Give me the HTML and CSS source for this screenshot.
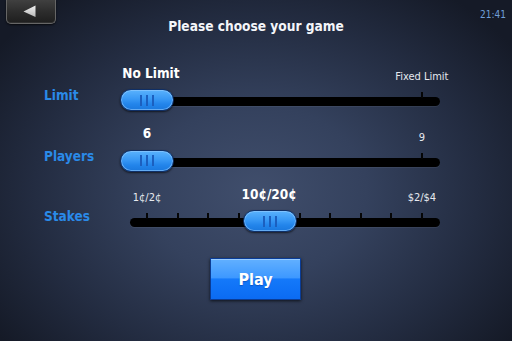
FILE: index.html
```html
<!DOCTYPE html>
<html lang="en">
<head>
<meta charset="utf-8">
<title>Choose your game</title>
<link rel="stylesheet" href="styles.css">
</head>
<body>
<div class="screen">
  <header class="top">
    <button class="back" aria-label="Back">
      <svg width="14" height="13" viewBox="0 0 14 13"><defs><linearGradient id="tri" x1="0" y1="0" x2="0" y2="1"><stop offset="0" stop-color="#f2f2f2"/><stop offset="1" stop-color="#b8b8b8"/></linearGradient></defs><polygon points="0.5,6.5 12.5,0.5 12.5,12" fill="url(#tri)"/></svg>
    </button>
    <h1 class="title">Please choose your game</h1>
    <span class="clock">21:41</span>
  </header>

  <main class="options">
    <section class="row">
      <div class="label">Limit</div>
      <div class="values">
        <span class="val current at-0 nudge"><span>No Limit</span></span>
        <span class="val at-9"><span>Fixed Limit</span></span>
      </div>
      <div class="slider">
        <div class="ticks"><i></i><i></i></div>
        <div class="track"></div>
        <div class="thumb pos-0"><b></b><b></b><b></b></div>
      </div>
    </section>

    <section class="row">
      <div class="label">Players</div>
      <div class="values">
        <span class="val current at-0"><span>6</span></span>
        <span class="val at-9"><span>9</span></span>
      </div>
      <div class="slider">
        <div class="ticks"><i></i><i></i></div>
        <div class="track"></div>
        <div class="thumb pos-0"><b></b><b></b><b></b></div>
      </div>
    </section>

    <section class="row">
      <div class="label">Stakes</div>
      <div class="values">
        <span class="val at-0"><span>1¢/2¢</span></span>
        <span class="val current at-4"><span>10¢/20¢</span></span>
        <span class="val at-9"><span>$2/$4</span></span>
      </div>
      <div class="slider">
        <div class="ticks"><i></i><i></i><i></i><i></i><i></i><i></i><i></i><i></i><i></i><i></i></div>
        <div class="track"></div>
        <div class="thumb pos-4"><b></b><b></b><b></b></div>
      </div>
    </section>
  </main>

  <div class="actions">
    <button class="play">Play</button>
  </div>
</div>
</body>
</html>
```

FILE: styles.css
```css
html, body {
  margin: 0;
  padding: 0;
}

body {
  width: 512px;
  height: 341px;
  overflow: hidden;
  background: #161c2a;
  font-family: "DejaVu Sans Condensed", "DejaVu Sans", sans-serif;
  font-stretch: condensed;
}

.screen {
  width: 512px;
  height: 341px;
  display: flex;
  flex-direction: column;
  background: radial-gradient(ellipse 62% 72% at 50% 56%, #404e6c 0%, #34415d 35%, #232c41 70%, #151a27 100%);
}

/* header */
.top {
  height: 64px;
  display: grid;
  grid-template-columns: 1fr auto 1fr;
  align-items: start;
}

.back {
  justify-self: start;
  margin: 0 0 0 6px;
  width: 50px;
  height: 24px;
  padding: 0 0 1px 0;
  border: 1px solid #666;
  border-top: none;
  border-radius: 0 0 5px 5px;
  background: linear-gradient(#404040 0%, #2d2d2d 50%, #1e1e1e 100%);
  box-shadow: 0 1px 2px rgba(0, 0, 0, 0.7), inset 0 -1px 0 rgba(255, 255, 255, 0.08);
  display: flex;
  align-items: center;
  justify-content: center;
}

.back svg {
  display: block;
  margin-right: 3px;
}

.title {
  margin: 19px 0 0 0;
  font-size: 13.6px;
  line-height: 14px;
  font-weight: bold;
  color: #f4f6fa;
  white-space: nowrap;
}

.clock {
  justify-self: end;
  margin: 9.5px 6px 0 0;
  font-size: 10px;
  line-height: 10px;
  color: #6f9fd8;
}

/* option rows */
.options {
  display: flex;
  flex-direction: column;
  gap: 12.5px;
}

.row {
  display: grid;
  grid-template-columns: 120px 320px;
  grid-template-rows: 26px 22px;
}

.label {
  grid-column: 1;
  grid-row: 2;
  align-self: start;
  padding-left: 44px;
  font-size: 13.5px;
  line-height: 10px;
  font-weight: bold;
  color: #2a8ae8;
}

.values {
  grid-column: 2;
  grid-row: 1;
  display: grid;
  grid-template-columns: repeat(10, 30.55px);
  margin-left: 11.7px;
  align-items: end;
}

.val {
  grid-row: 1;
  display: flex;
  justify-content: center;
  white-space: nowrap;
  font-size: 11px;
  line-height: 11px;
  color: #e6e9ef;
  margin-bottom: 8px;
}

.val.current {
  font-size: 13.5px;
  line-height: 14px;
  font-weight: bold;
  color: #ffffff;
  margin-bottom: 10.5px;
}

.val.nudge {
  padding-left: 8px;
}

.at-0 { grid-column: 1; }
.at-4 { grid-column: 5; }
.at-9 { grid-column: 10; }

.slider {
  grid-column: 2;
  grid-row: 2;
  position: relative;
  height: 22px;
  padding-top: 2px;
  box-sizing: border-box;
}

.ticks {
  margin-left: 26px;
  width: 277px;
  height: 6px;
  display: flex;
  justify-content: space-between;
}

.ticks i {
  display: block;
  width: 2px;
  height: 6px;
  background: #050505;
}

.track {
  margin: -1px 0 0 10px;
  width: 310px;
  height: 9px;
  border-radius: 4.5px;
  background: #000;
  box-shadow: 0 1px 0 rgba(255, 255, 255, 0.06);
}

.thumb {
  position: absolute;
  top: -1px;
  width: 54px;
  height: 22px;
  box-sizing: border-box;
  border-radius: 11px;
  border: 1px solid #0f2f66;
  background: linear-gradient(#5ab2fd 0%, #3898f5 45%, #2385eb 70%, #1a78de 100%);
  box-shadow: inset 0 0 0 1px rgba(150, 205, 255, 0.6), 0 1px 2px rgba(0, 0, 0, 0.6);
  display: flex;
  justify-content: center;
  align-items: center;
  gap: 4.5px;
}

.thumb.pos-0 { left: 0; }
.thumb.pos-4 { left: 123px; }

.thumb b {
  display: block;
  width: 1.5px;
  height: 11px;
  background: #1b5fbf;
}

/* play */
.actions {
  display: flex;
  justify-content: center;
  margin-top: 25px;
}

.play {
  margin: 0 0 0 -1px;
  width: 91px;
  height: 42px;
  padding: 0;
  border: 1px solid #0a3c96;
  background: linear-gradient(#62b0ff 0%, #3d98ff 47%, #1479fa 50%, #0b6bf2 100%);
  box-shadow: inset 0 1px 0 rgba(255, 255, 255, 0.35), 0 1px 3px rgba(0, 0, 0, 0.7);
  font-family: "DejaVu Sans Condensed", "DejaVu Sans", sans-serif;
  font-stretch: condensed;
  font-size: 16px;
  font-weight: bold;
  color: #ffffff;
  text-shadow: 0 1px 1px rgba(0, 40, 120, 0.4);
}
```
